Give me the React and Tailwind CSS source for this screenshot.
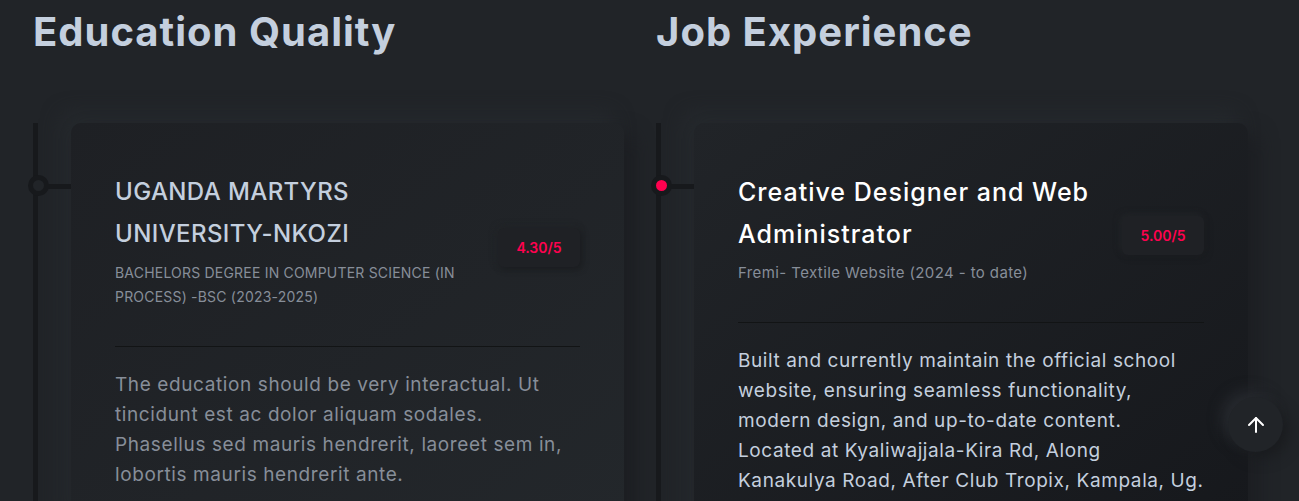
import { ArrowUp } from "lucide-react";

const education = {
  title: ["UGANDA MARTYRS", "UNIVERSITY-NKOZI"],
  sub: ["BACHELORS DEGREE IN COMPUTER SCIENCE (IN", "PROCESS) -BSC (2023-2025)"],
  score: "4.30/5",
  text: [
    "The education should be very interactual. Ut",
    "tincidunt est ac dolor aliquam sodales.",
    "Phasellus sed mauris hendrerit, laoreet sem in,",
    "lobortis mauris hendrerit ante.",
  ],
};

const job = {
  title: ["Creative Designer and Web", "Administrator"],
  sub: ["Fremi- Textile Website (2024 - to date)"],
  score: "5.00/5",
  text: [
    "Built and currently maintain the official school",
    "website, ensuring seamless functionality,",
    "modern design, and up-to-date content.",
    "Located at Kyaliwajjala-Kira Rd, Along",
    "Kanakulya Road, After Club Tropix, Kampala, Ug.",
  ],
};

function Lines({ lines }) {
  return lines.map((line, i) => (
    <span key={i} className="block whitespace-nowrap">
      {line}
    </span>
  ));
}

function ResumeItem({ item, active }) {
  return (
    <div className="relative border-l-[5px] border-[#17191c] pl-[33px]">
      {/* timeline marker */}
      <span
        className={`absolute left-[-10px] top-[52px] h-[21px] w-[21px] rounded-full border-[5px] border-[#17191c] ${
          active ? "bg-[#ff014f]" : "bg-[#212428]"
        }`}
      />
      <span className="absolute left-[10px] top-[61px] h-[5px] w-[23px] bg-[#17191c]" />

      <div
        className={`rounded-[10px] px-[44px] pt-[48px] pb-[40px] shadow-[10px_10px_19px_#1c1e22,-10px_-10px_19px_#262a2e] ${
          active
            ? "bg-gradient-to-br from-[#212428] to-[#16181c]"
            : "bg-gradient-to-br from-[#1e2024] to-[#23272b]"
        }`}
      >
        <div className="flex items-center justify-between border-b border-[#121415] pb-[37px]">
          <div className="w-[370px]">
            <h4
              className={`font-medium leading-[42px] ${
                active
                  ? "text-[25px] tracking-[1px] text-white"
                  : "text-[24px] tracking-[0.4px] text-[#c4cfde]"
              }`}
            >
              <Lines lines={item.title} />
            </h4>
            <span
              className={`mt-[6px] block leading-[24px] text-[#878e99] ${
                active ? "text-[15px] tracking-[0.4px]" : "text-[14px] tracking-[0.2px]"
              }`}
            >
              <Lines lines={item.sub} />
            </span>
          </div>
          <div className="mt-[15px] flex h-[39px] w-[82px] items-center justify-center rounded-[6px] bg-[#1f2125] text-[14px] font-semibold text-[#ff014f] shadow-[2px_2px_6px_#1a1c1f,-2px_-2px_6px_#232629]">
            {item.score}
          </div>
        </div>
        <p
          className={`pt-[23px] text-[19px] leading-[30px] tracking-[0.6px] ${
            active ? "text-[#c4cfde]" : "text-[#878e99]"
          }`}
        >
          <Lines lines={item.text} />
        </p>
      </div>
    </div>
  );
}

export default function App() {
  return (
    <main
      className="min-h-screen overflow-hidden bg-[#212428] pl-[33px]"
      style={{ fontFamily: "Inter, 'Noto Sans', sans-serif" }}
    >
      <div className="grid grid-cols-[591px_592px] gap-8 pt-[9px]">
        <section>
          <h2 className="text-[40px] font-bold leading-[46px] tracking-[1px] text-[#c4cfde]">
            Education Quality
          </h2>
          <div className="mt-[68px]">
            <ResumeItem item={education} />
          </div>
        </section>
        <section>
          <h2 className="text-[40px] font-bold leading-[46px] tracking-[1px] text-[#c4cfde]">
            Job Experience
          </h2>
          <div className="mt-[68px]">
            <ResumeItem item={job} active />
          </div>
        </section>
      </div>

      <button className="fixed bottom-[49px] right-[16px] flex h-[55px] w-[55px] items-center justify-center rounded-full bg-[#212428] text-white shadow-[6px_6px_14px_#1a1c1f,-6px_-6px_14px_#282b30]">
        <ArrowUp size={24} strokeWidth={2} />
      </button>
    </main>
  );
}
